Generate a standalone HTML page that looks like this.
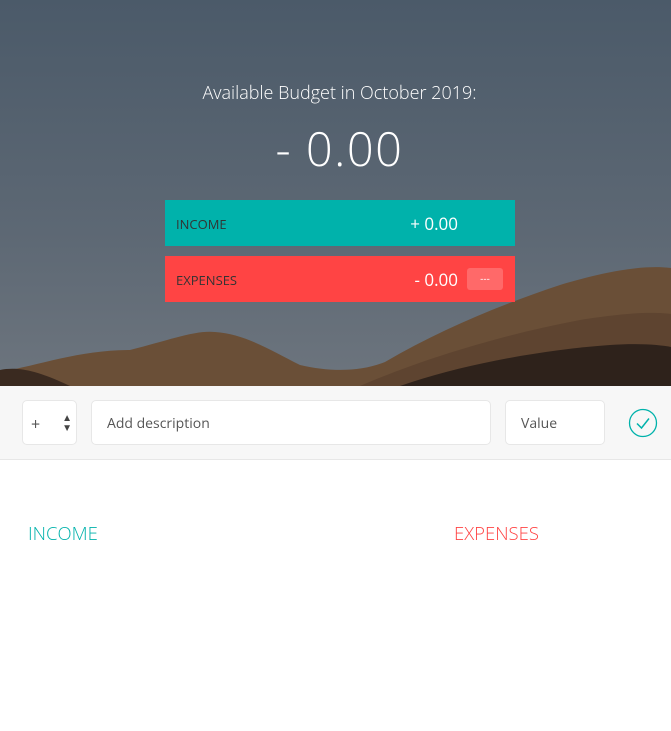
<!DOCTYPE html>
<html><head><style>
*{margin:0;padding:0;box-sizing:border-box}
body{width:671px;height:731px;background:#fff;font-family:"Open Sans","Liberation Sans",sans-serif;position:relative;overflow:hidden}
.top{position:absolute;left:0;top:0;width:671px;height:386px;overflow:hidden;background:linear-gradient(#4b5a69,#5d6874 60%,#6d757e)}
.abs{position:absolute}
.title{left:4px;width:671px;top:81px;text-align:center;color:#fff;font-size:18px;font-weight:300}
.val{left:4px;width:671px;top:116px;text-align:center;color:#fff;font-size:47px;font-weight:300;letter-spacing:1.5px}
.box{left:165px;width:350px;height:46px;color:#fff}
.box .l{position:absolute;left:11px;top:15px;font-size:13px;color:#333;}
.box .r{position:absolute;right:57px;top:12px;font-size:17px}
.badge{position:absolute;left:302px;top:12px;width:36px;height:22px;background:rgba(255,255,255,.2);border-radius:3px;font-size:10px;text-align:center;line-height:20px}
.bar{left:0;top:386px;width:671px;height:74px;background:#f7f7f7;border-bottom:1px solid #e7e7e7}
.in{position:absolute;top:14px;height:45px;background:#fff;border:1px solid #e7e7e7;border-radius:5px;font-size:14px;color:#555;padding:13px 15px}
</style></head><body>
<div class="top">
<svg class="abs" style="left:0;top:0" width="671" height="386">
<path d="M0 372 C40 365 80 350 130 350 C170 340 195 330 215 332 C245 334 270 350 300 365 C330 372 360 372 385 362 C440 330 500 305 560 285 C610 270 645 265 671 268 L671 386 L0 386Z" fill="#6a4f37"/>
<path d="M0 386 L0 370 C20 366 40 372 70 386Z" fill="#3a2a20"/>
<path d="M360 386 C420 360 500 335 580 320 C630 312 655 312 671 314 L671 386Z" fill="#5e4430"/>
<path d="M400 386 C460 365 540 350 610 345 C640 343 660 345 671 347 L671 386Z" fill="#2e221b"/>
</svg>
<div class="abs title">Available Budget in October 2019:</div>
<div class="abs val">- 0.00</div>
<div class="abs box" style="top:200px;background:#00b2ab"><span class="l">INCOME</span><span class="r">+ 0.00</span></div>
<div class="abs box" style="top:256px;background:#ff4444"><span class="l">EXPENSES</span><span class="r">- 0.00</span><span class="badge">---</span></div>
</div>
<div class="abs bar">
<div class="in" style="left:22px;width:55px;padding:12px 8px;font-size:16px">+<span style="position:absolute;right:4px;top:11px;font-size:10px;line-height:10px;color:#444">▲<br>▼</span></div>
<div class="in" style="left:91px;width:400px">Add description</div>
<div class="in" style="left:505px;width:100px">Value</div>
<svg class="abs" style="left:628px;top:22px" width="30" height="30"><circle cx="15" cy="15" r="13.5" fill="none" stroke="#00b2ab" stroke-width="1.3"/><path d="M9 15.5 L13.5 20 L21 10.5" fill="none" stroke="#00b2ab" stroke-width="1.5"/></svg>
</div>
<div class="abs" style="left:28px;top:521px;font-size:18.5px;color:#00b2ab;font-weight:300">INCOME</div>
<div class="abs" style="left:454px;top:521px;font-size:18.5px;color:#ff4444;font-weight:300">EXPENSES</div>
</body></html>
